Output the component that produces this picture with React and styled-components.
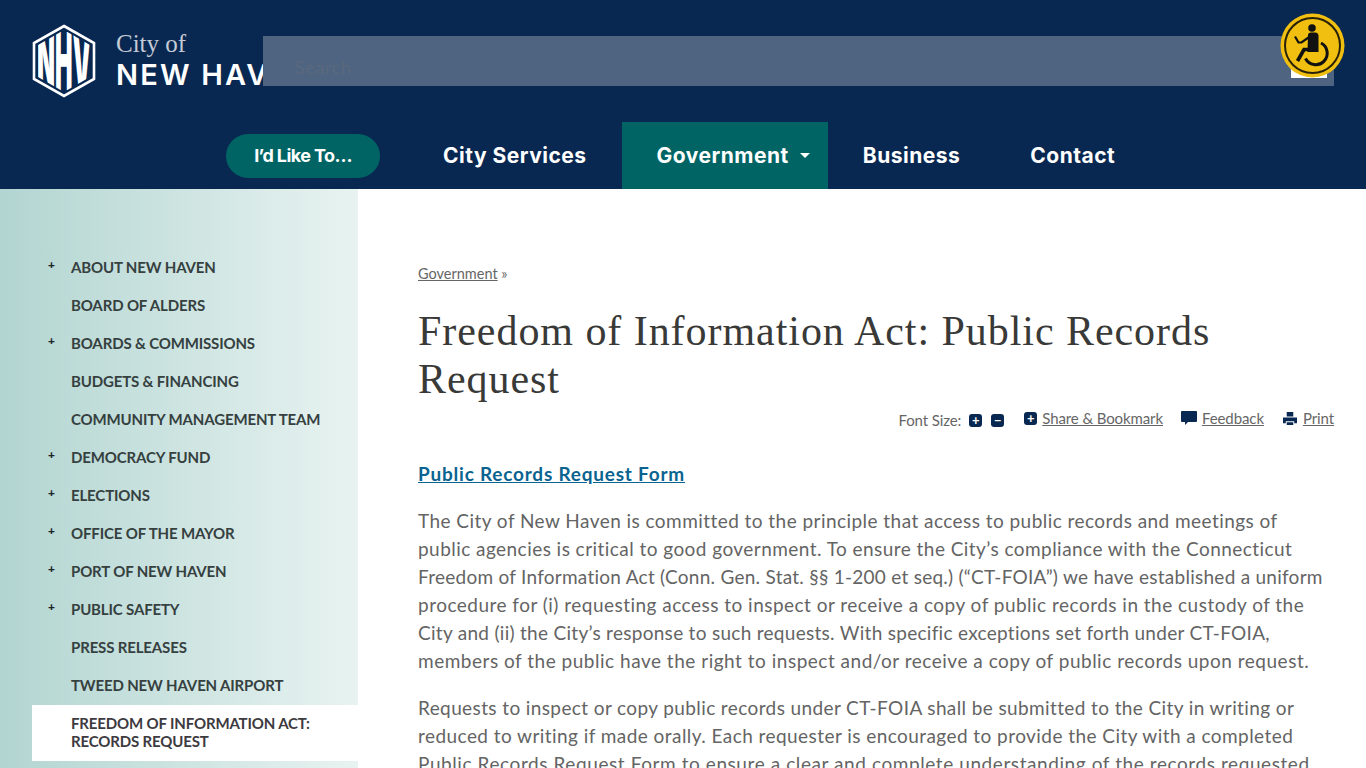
import styled, { createGlobalStyle } from "styled-components";

const GlobalStyle = createGlobalStyle`
  html, body {
    margin: 0;
    height: 100%;
    overflow: hidden;
    background: #fff;
    font-family: "Lato", "Liberation Sans", sans-serif;
  }
  #root { height: 100%; }
  * { box-sizing: border-box; }
`;

const Page = styled.div`
  height: 768px;
  overflow: hidden;
  display: flex;
  flex-direction: column;
`;

const Header = styled.header`
  position: relative;
  flex: none;
  height: 189px;
  background: #092851;
  padding: 24px 32px 0;
`;

const LogoLink = styled.a`
  display: flex;
  align-items: center;
  gap: 20px;
  height: 74px;
`;

const LogoWords = styled.div`
  display: flex;
  flex-direction: column;
  color: #fff;
  margin-top: 2px;
`;

const CityOf = styled.span`
  font-family: "Liberation Serif", serif;
  font-size: 25px;
  line-height: 26px;
  color: #c4cbd6;
  margin: -2px 0 2px;
`;

const Haven = styled.span`
  font-family: "Inter", sans-serif;
  font-weight: 600;
  font-size: 29px;
  line-height: 32px;
  letter-spacing: 2.2px;
  white-space: nowrap;
`;

const SearchBar = styled.div`
  position: absolute;
  left: 263px;
  top: 36px;
  width: 1071px;
  height: 50px;
  background: #4f6481;
  display: flex;
  align-items: center;
  padding: 12px 0 0 32px;
  font-size: 18px;
  letter-spacing: 0.6px;
  color: #5a687d;
`;

const SearchButton = styled.div`
  position: absolute;
  right: 7px;
  top: 30px;
  width: 36px;
  height: 12px;
  background: #fff;
`;

const AccessBadge = styled.svg`
  position: absolute;
  left: 1280px;
  top: 13px;
`;

const Nav = styled.nav`
  position: absolute;
  left: 226px;
  top: 122px;
  height: 67px;
  display: flex;
  align-items: center;
`;

const Pill = styled.a`
  width: 154px;
  height: 44px;
  margin-right: 28px;
  border-radius: 22px;
  background: #006464;
  color: #fff;
  font-family: "Inter", sans-serif;
  font-weight: 700;
  font-size: 18px;
  letter-spacing: -0.6px;
  display: flex;
  align-items: center;
  justify-content: center;
`;

const NavItem = styled.a`
  height: 67px;
  padding: 0 ${(p) => (p.$active ? 18 : 35)}px 0 35px;
  display: flex;
  align-items: center;
  gap: 8px;
  color: #fff;
  font-family: "Inter", sans-serif;
  font-weight: 700;
  font-size: 21px;
  letter-spacing: 0.5px;
  background: ${(p) => (p.$active ? "#006464" : "transparent")};
`;

const Caret = styled.span`
  width: 0;
  height: 0;
  margin-left: 3px;
  border-left: 5px solid transparent;
  border-right: 5px solid transparent;
  border-top: 5px solid #fff;
`;

const Body = styled.div`
  flex: 1;
  display: flex;
  min-height: 0;
`;

const Sidebar = styled.aside`
  flex: none;
  width: 358px;
  padding: 59px 0 0 32px;
  background: linear-gradient(90deg, #b2d5d1 0%, #e8f3f1 100%);
`;

const SideItem = styled.a`
  position: relative;
  display: block;
  padding: ${(p) => (p.$current ? "9px 0 11px 39px" : "10px 0 10px 39px")};
  margin-top: ${(p) => (p.$current ? 1 : 0)}px;
  font-size: 15px;
  line-height: 18px;
  font-weight: 700;
  letter-spacing: -0.15px;
  white-space: nowrap;
  color: ${(p) => (p.$current ? "#3d3a40" : "#35403f")};
  background: ${(p) => (p.$current ? "#fff" : "transparent")};
  text-transform: uppercase;
`;

const Plus = styled.span`
  position: absolute;
  left: 16px;
  top: 8px;
  font-size: 12px;
  font-weight: 900;
  color: #1c2526;
`;

const Main = styled.main`
  flex: 1;
  min-width: 0;
  padding: 76px 32px 0 60px;
  color: #646464;
`;

const Crumb = styled.div`
  font-size: 14.5px;
  line-height: 18px;
  color: #6a6a6a;
`;

const Underlined = styled.a`
  text-decoration: underline;
  color: #666;
`;

const Title = styled.h1`
  margin: 24px 0 0;
  font-family: "Liberation Serif", serif;
  font-weight: 400;
  font-size: 42px;
  line-height: 48px;
  letter-spacing: 0.95px;
  color: #393937;
`;

const Tools = styled.div`
  display: flex;
  justify-content: flex-end;
  align-items: center;
  height: 24px;
  margin-top: 4px;
  font-size: 15px;
  letter-spacing: -0.1px;
  color: #666;
`;

const ToolLabel = styled.span`
  margin-right: 8px;
  margin-top: 2px;
`;

const SquareBtn = styled.span`
  display: inline-flex;
  align-items: center;
  justify-content: center;
  width: 13px;
  height: 13px;
  border-radius: 3px;
  background: #092851;
  color: #fff;
  font-size: 13px;
  line-height: 13px;
  font-weight: 700;
  margin-right: ${(p) => p.$gap || 0}px;
  margin-top: 2px;
`;

const ToolLink = styled.span`
  display: inline-flex;
  align-items: center;
  gap: ${(p) => p.$inner || 5}px;
  margin-left: ${(p) => p.$gap || 0}px;
  margin-top: -3px;
`;

const FormLink = styled.a`
  display: block;
  margin-top: 29px;
  font-size: 19px;
  line-height: 28px;
  font-weight: 700;
  letter-spacing: 0.78px;
  color: #0a6390;
  text-decoration: underline;
`;

const Para = styled.p`
  margin: 19px 0 0;
  font-size: 19px;
  line-height: 28px;
  white-space: nowrap;
`;

const Line = styled.span`
  display: block;
  letter-spacing: ${(p) => p.$track}px;
`;

const sideItems = [
  ["About New Haven", true],
  ["Board of Alders", false],
  ["Boards & Commissions", true],
  ["Budgets & Financing", false],
  ["Community Management Team", false],
  ["Democracy Fund", true],
  ["Elections", true],
  ["Office of the Mayor", true],
  ["Port of New Haven", true],
  ["Public Safety", true],
  ["Press Releases", false],
  ["Tweed New Haven Airport", false],
];

const firstPara = [
  ["The City of New Haven is committed to the principle that access to public records and meetings of", 0.45],
  ["public agencies is critical to good government. To ensure the City’s compliance with the Connecticut", 0.45],
  ["Freedom of Information Act (Conn. Gen. Stat. §§ 1-200 et seq.) (“CT-FOIA”) we have established a uniform", 0.26],
  ["procedure for (i) requesting access to inspect or receive a copy of public records in the custody of the", 0.48],
  ["City and (ii) the City’s response to such requests. With specific exceptions set forth under CT-FOIA,", 0.29],
  ["members of the public have the right to inspect and/or receive a copy of public records upon request.", 0.51],
];

const secondPara = [
  ["Requests to inspect or copy public records under CT-FOIA shall be submitted to the City in writing or", 0.39],
  ["reduced to writing if made orally. Each requester is encouraged to provide the City with a completed", 0.44],
  ["Public Records Request Form to ensure a clear and complete understanding of the records requested.", 0.58],
];

const App = () => {
  return (
    <Page>
      <GlobalStyle />
      <Header>
        <LogoLink>
          <svg width="64" height="74" viewBox="0 0 64 74">
            <defs>
              <clipPath id="hex">
                <path d="M32 6 L58 21 V53 L32 68 L6 53 V21 Z" />
              </clipPath>
            </defs>
            <path d="M32 2 L62 19 V55 L32 72 L2 55 V19 Z" fill="none" stroke="#fff" strokeWidth="2.6" />
            <g clipPath="url(#hex)">
              <text x="32" y="66" textAnchor="middle" textLength="54" lengthAdjust="spacingAndGlyphs" fill="#fff" fontFamily="Inter" fontWeight="900" fontSize="80">
                NHV
              </text>
            </g>
          </svg>
          <LogoWords>
            <CityOf>City of</CityOf>
            <Haven>NEW HAVEN</Haven>
          </LogoWords>
        </LogoLink>
        <SearchBar>
          Search
          <SearchButton />
        </SearchBar>
        <Nav>
          <Pill>I’d Like To…</Pill>
          <NavItem>City Services</NavItem>
          <NavItem $active>
            Government <Caret />
          </NavItem>
          <NavItem>Business</NavItem>
          <NavItem>Contact</NavItem>
        </Nav>
        <AccessBadge width="65" height="65" viewBox="0 0 65 65">
          <circle cx="32.5" cy="32.5" r="32" fill="#f0bf0f" />
          <circle cx="32.5" cy="32.5" r="27.5" fill="none" stroke="#2a2207" strokeWidth="2" />
          <circle cx="32" cy="15" r="3.8" fill="#111" />
          <path d="M28 22 q0 -2.5 3 -2.5 h4 q3.5 0 3.5 3.5 v16 h-11 z" fill="#111" />
          <path d="M30 23.5 l-8.5 6 h-3 l-3.5 -6" fill="none" stroke="#111" strokeWidth="2.2" />
          <path d="M30 36.5 h-6 l-6.5 11.5" fill="none" stroke="#111" strokeWidth="3.6" />
          <path d="M41 30 a11.5 11.5 0 1 1 -15.5 15.5" fill="none" stroke="#111" strokeWidth="3" />
        </AccessBadge>
      </Header>
      <Body>
        <Sidebar>
          {sideItems.map(([label, expandable]) => (
            <SideItem key={label}>
              {expandable && <Plus>+</Plus>}
              {label}
            </SideItem>
          ))}
          <SideItem $current>
            Freedom of Information Act:
            <br />
            Records Request
          </SideItem>
        </Sidebar>
        <Main>
          <Crumb>
            <Underlined>Government</Underlined> »
          </Crumb>
          <Title>
            Freedom of Information Act: Public Records
            <br />
            Request
          </Title>
          <Tools>
            <ToolLabel>Font Size:</ToolLabel>
            <SquareBtn $gap={9}>+</SquareBtn>
            <SquareBtn>−</SquareBtn>
            <ToolLink $gap={20}>
              <SquareBtn>+</SquareBtn>
              <Underlined>Share & Bookmark</Underlined>
            </ToolLink>
            <ToolLink $gap={18}>
              <svg width="16" height="16" viewBox="0 0 16 16">
                <path d="M0 2 q0 -1 1 -1 h14 q1 0 1 1 v9 q0 1 -1 1 h-8 l-3 3 v-3 h-3 q-1 0 -1 -1 z" fill="#092851" />
              </svg>
              <Underlined>Feedback</Underlined>
            </ToolLink>
            <ToolLink $gap={19} $inner={6}>
              <svg width="14" height="14" viewBox="0 0 15 15">
                <path d="M4 1 h7 v5 h-7 z M0 7 h15 v6 h-3 v-2 h-9 v2 h-3 z M4 12 h7 v3 h-7 z" fill="#092851" />
              </svg>
              <Underlined>Print</Underlined>
            </ToolLink>
          </Tools>
          <FormLink>Public Records Request Form</FormLink>
          <Para>
            {firstPara.map(([text, track]) => (
              <Line key={text} $track={track}>{text}</Line>
            ))}
          </Para>
          <Para>
            {secondPara.map(([text, track]) => (
              <Line key={text} $track={track}>{text}</Line>
            ))}
          </Para>
        </Main>
      </Body>
    </Page>
  );
};

export default App;
